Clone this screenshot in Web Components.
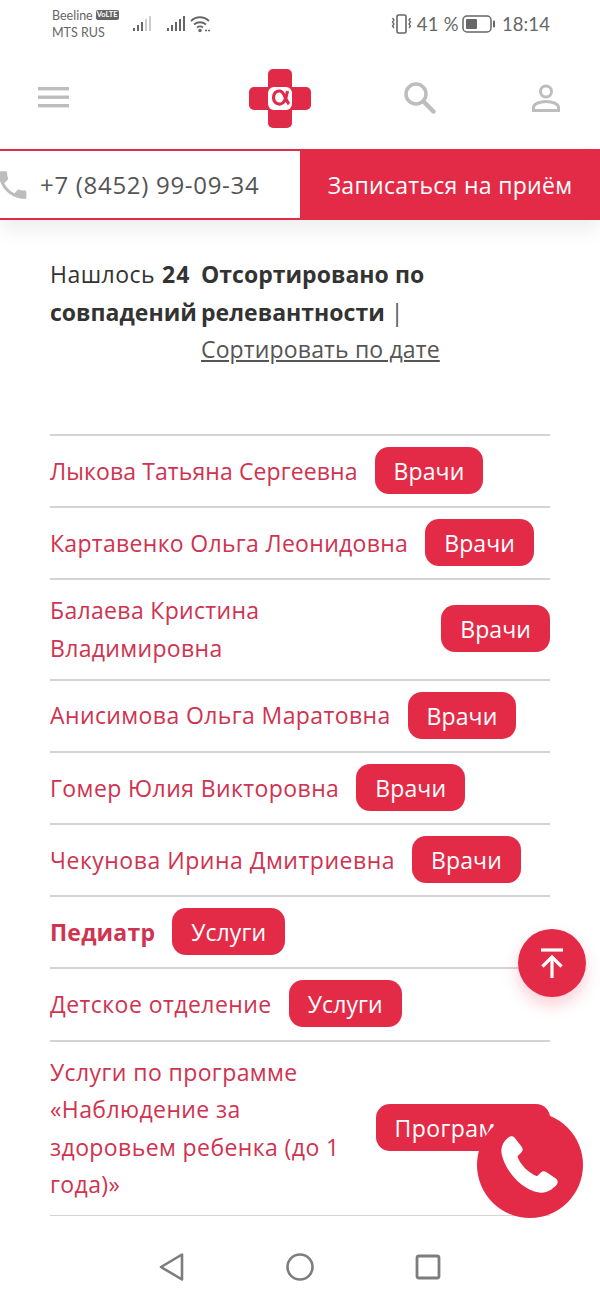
<!DOCTYPE html>
<html>
<head>
<meta charset="utf-8">
<title>Поиск</title>
<style>
  html, body { margin: 0; padding: 0; height: 100%; overflow: hidden; background: #fff; }
  body { font-family: "Open Sans", "Noto Sans", sans-serif; }
</style>
</head>
<body>
<clinic-app>
  <status-bar></status-bar>
  <site-header></site-header>
  <call-bar></call-bar>
  <search-summary></search-summary>
  <result-list>
    <result-row tag="Врачи" style="--track:.1px">Лыкова Татьяна Сергеевна</result-row>
    <result-row tag="Врачи" style="--track:.31px">Картавенко Ольга Леонидовна</result-row>
    <result-row tag="Врачи" style="--track:.33px">Балаева Кристина Владимировна</result-row>
    <result-row tag="Врачи" style="--track:.39px">Анисимова Ольга Маратовна</result-row>
    <result-row tag="Врачи" style="--track:.41px">Гомер Юлия Викторовна</result-row>
    <result-row tag="Врачи" style="--track:.51px">Чекунова Ирина Дмитриевна</result-row>
    <result-row tag="Услуги" style="--track:.2px"><b>Педиатр</b></result-row>
    <result-row tag="Услуги" style="--track:.45px">Детское отделение</result-row>
    <result-row tag="Программы" style="--track:.4px;--tag-track:.4px">Услуги по программе «Наблюдение за здоровьем ребенка (до 1 года)»</result-row>
  </result-list>
  <nav-bar></nav-bar>
  <float-buttons></float-buttons>
</clinic-app>

<script>
const appTemplate = document.createElement('template');
appTemplate.innerHTML = `
<style>
  :host { display: flex; flex-direction: column; position: relative; width: 600px; height: 1299px; overflow: hidden; background: #fff; }
</style>
<slot></slot>
`;

class ClinicApp extends HTMLElement {
    constructor() {
        super();
        this.attachShadow({ mode: 'open' });
        this.shadowRoot.appendChild(appTemplate.content.cloneNode(true));
    }
}

const statusTemplate = document.createElement('template');
statusTemplate.innerHTML = `
<style>
  :host { display: flex; align-items: center; height: 47px; flex: none; padding: 0 50px 0 52px; color: #666; font-family: "Lato", "Noto Sans", sans-serif; }
  .carriers { font-size: 12.5px; width: 81px; }
  .carriers div { display: flex; align-items: center; gap: 3px; height: 17px; }
  .volte { background: #666; color: #fff; font-size: 7.5px; font-weight: 700; line-height: 10px; padding: 0 1px; border-radius: 2px; }
  svg { display: block; flex: none; }
  .right { margin-left: auto; display: flex; align-items: center; font-size: 18.5px; }
  .pct { margin: 0 3px 0 5px; letter-spacing: .3px; }
  .time { margin-left: 7px; letter-spacing: .1px; }
</style>
<div class="carriers">
  <div>Beeline <span class="volte">VoLTE</span></div>
  <div>MTS RUS</div>
</div>
<svg width="18" height="18" viewBox="0 0 18 18" style="margin-right:16px">
  <g fill="#666"><rect x="0" y="13" width="2" height="3"/><rect x="4" y="10" width="2" height="6"/><rect x="8" y="7" width="2" height="9"/></g>
  <g fill="#ccc"><rect x="12" y="4" width="2" height="12"/><rect x="16" y="1" width="2" height="15"/></g>
</svg>
<svg width="18" height="18" viewBox="0 0 18 18" style="margin-right:5px" fill="#666">
  <rect x="0" y="13" width="2" height="3"/><rect x="4" y="10" width="2" height="6"/><rect x="8" y="7" width="2" height="9"/><rect x="12" y="4" width="2" height="12"/><rect x="16" y="1" width="2" height="15"/>
</svg>
<svg width="22" height="18" viewBox="0 0 22 18" fill="none" stroke="#666" stroke-width="1.800">
  <path d="M1 6c5-5 13-5 18 0"/><path d="M4 9.500c3.500-3 8.500-3 12 0"/><path d="M7 12.500c2-1.500 4-1.500 6 0"/>
  <circle cx="10" cy="15.500" r="1.700" fill="#666" stroke="none"/><path d="M15 15.500h6" stroke-width="1.500" stroke-dasharray="2 1"/>
</svg>
<div class="right">
  <svg width="21" height="20" viewBox="0 0 21 20" fill="none" stroke="#666" stroke-width="1.300">
    <rect x="6" y="1" width="9" height="18" rx="1.500" stroke-width="1.600"/>
    <path d="M1.500 4l1.500 2-1.500 2 1.500 2-1.500 2 1.500 2M19.500 4l-1.500 2 1.500 2-1.500 2 1.500 2-1.500 2"/>
  </svg>
  <span class="pct">41 %</span>
  <svg width="33" height="18" viewBox="0 0 33 18" fill="none">
    <rect x="1" y="1" width="28" height="16" rx="4" stroke="#666" stroke-width="1.500"/>
    <rect x="4" y="4" width="11" height="10" rx="1" fill="#666"/>
    <rect x="31" y="5.500" width="2" height="7" rx="1" fill="#666"/>
  </svg>
  <span class="time">18:14</span>
</div>
`;

class StatusBar extends HTMLElement {
    constructor() {
        super();
        this.attachShadow({ mode: 'open' });
        this.shadowRoot.appendChild(statusTemplate.content.cloneNode(true));
    }
}

const headerTemplate = document.createElement('template');
headerTemplate.innerHTML = `
<style>
  :host { display: flex; align-items: center; height: 102px; flex: none; padding: 0 40px 0 38px; box-sizing: border-box; }
  svg { display: block; flex: none; }
  .logo { margin-left: 180px; }
  .search { margin-left: 92px; margin-top: -2px; }
  .user { margin-left: auto; }
</style>
<svg width="31" height="22" viewBox="0 0 31 22" fill="#bdbdbd">
  <rect y="0" width="31" height="3.400"/><rect y="8.500" width="31" height="3.400"/><rect y="17" width="31" height="3.400"/>
</svg>
<svg class="logo" width="62" height="59" viewBox="0 0 62 59">
  <path fill="#e02a47" d="M19 5a5 5 0 0 1 5-5h14a5 5 0 0 1 5 5v13h14a5 5 0 0 1 5 5v13a5 5 0 0 1-5 5H43v13a5 5 0 0 1-5 5H24a5 5 0 0 1-5-5V41H5a5 5 0 0 1-5-5V23a5 5 0 0 1 5-5h14z"/>
  <rect x="19" y="18" width="24" height="23" rx="6" fill="#fff"/>
  <path fill="none" stroke="#e02a47" stroke-width="3.200" d="M38.500 22c-1 6-2.500 12.500-7 13-4.500.4-7-2.500-7-6.500s2.500-6.800 6.500-6.500c4.500.4 5 9 9 13"/>
</svg>
<svg class="search" width="33" height="33" viewBox="0 0 33 33" fill="none" stroke="#bdbdbd">
  <circle cx="13" cy="13" r="10" stroke-width="3.500"/><path d="M20.500 20.500L30.500 30.500" stroke-width="4.500" stroke-linecap="round"/>
</svg>
<svg class="user" width="28" height="28" viewBox="0 0 28 28" fill="none" stroke="#bdbdbd" stroke-width="3">
  <circle cx="14" cy="7.500" r="5.500"/><path d="M1.500 26.500v-3c0-3.500 6-6 12.500-6s12.500 2.500 12.500 6v3z"/>
</svg>
`;

class SiteHeader extends HTMLElement {
    constructor() {
        super();
        this.attachShadow({ mode: 'open' });
        this.shadowRoot.appendChild(headerTemplate.content.cloneNode(true));
    }
}

const callTemplate = document.createElement('template');
callTemplate.innerHTML = `
<style>
  :host { display: flex; height: 71px; flex: none; position: relative; z-index: 1; background: #fff; box-shadow: 0 10px 20px rgba(0,0,0,.07); box-sizing: border-box; }
  .phone { width: 300px; box-sizing: border-box; display: flex; align-items: center; border: 2px solid #e32b48; border-left: 0; border-right-width: 0; color: #555; font-size: 24px; letter-spacing: .7px; }
  svg { display: block; margin: 0 9px 0 -6px; flex: none; }
  .cta { flex: 1; background: #e32b48; color: #fff; font-size: 23px; display: flex; align-items: center; justify-content: center; letter-spacing: .3px; }
</style>
<div class="phone">
  <svg width="37" height="38" viewBox="0 0 24 24" fill="#bdbdbd"><path d="M6.600 10.800c1.400 2.800 3.800 5.100 6.600 6.600l2.200-2.200c.3-.3.700-.4 1-.2 1.100.4 2.300.6 3.600.6.600 0 1 .4 1 1V20c0 .6-.4 1-1 1C10.600 21 3 13.400 3 4c0-.6.400-1 1-1h3.500c.6 0 1 .4 1 1 0 1.300.2 2.500.6 3.600.1.300 0 .7-.2 1z"/></svg>
  <span>+7 (8452) 99-09-34</span>
</div>
<div class="cta">Записаться на приём</div>
`;

class CallBar extends HTMLElement {
    constructor() {
        super();
        this.attachShadow({ mode: 'open' });
        this.shadowRoot.appendChild(callTemplate.content.cloneNode(true));
    }
}

const summaryTemplate = document.createElement('template');
summaryTemplate.innerHTML = `
<style>
  :host { display: flex; flex: none; gap: 10px; padding: 36px 50px 0; height: 214px; box-sizing: border-box; color: #333; font-size: 23px; line-height: 37.500px; letter-spacing: .15px; }
  .count { width: 141px; flex: none; }
  .light { letter-spacing: .45px; }
  .num { letter-spacing: 1px; margin-left: 1px; }
  .sort { width: 241px; flex: none; }
  a { color: #555; text-decoration: underline; }
  .sep { color: #555; }
  b { display: inline-block; letter-spacing: .02px; }
</style>
<div class="count"><span class="light">Нашлось</span> <b class="num">24</b> <b>совпадений</b></div>
<div class="sort"><b>Отсортировано</b> <b>по</b> <b>релевантности</b> <span class="sep">|</span> <a>Сортировать по дате</a></div>
`;

class SearchSummary extends HTMLElement {
    constructor() {
        super();
        this.attachShadow({ mode: 'open' });
        this.shadowRoot.appendChild(summaryTemplate.content.cloneNode(true));
    }
}

const listTemplate = document.createElement('template');
listTemplate.innerHTML = `
<style>
  :host { display: block; flex: none; height: 782px; margin: 0 50px; border-top: 2px solid #d4d4d4; box-sizing: border-box; }
</style>
<slot></slot>
`;

class ResultList extends HTMLElement {
    constructor() {
        super();
        this.attachShadow({ mode: 'open' });
        this.shadowRoot.appendChild(listTemplate.content.cloneNode(true));
    }
}

const rowTemplate = document.createElement('template');
rowTemplate.innerHTML = `
<style>
  :host { display: flex; align-items: center; gap: 17px; padding: 11.100px 0 12.100px; border-bottom: 2px solid #d4d4d4; color: #cf3350; font-size: 23px; line-height: 37.500px; letter-spacing: var(--track, .27px); }
  .name { min-width: 0; margin: 1px 0 -1px; }
  .tag { flex: none; height: 47px; line-height: 49px; padding: 0 19px; border-radius: 14px; background: #e32b48; color: #fff; font-size: 23px; letter-spacing: var(--tag-track, .1px); }
</style>
<div class="name"><slot></slot></div>
<div class="tag"></div>
`;

class ResultRow extends HTMLElement {
    constructor() {
        super();
        this.attachShadow({ mode: 'open' });
        this.shadowRoot.appendChild(rowTemplate.content.cloneNode(true));
    }
    connectedCallback() {
        this.shadowRoot.querySelector('.tag').textContent = this.getAttribute('tag');
    }
}

const navTemplate = document.createElement('template');
navTemplate.innerHTML = `
<style>
  :host { display: flex; justify-content: space-between; align-items: center; flex: none; height: 83px; padding: 19px 159px 0 158px; box-sizing: border-box; background: #fff; }
  svg { display: block; }
</style>
<svg width="26" height="30" viewBox="0 0 26 30" fill="none" stroke="#7d7d7d" stroke-width="2.600" stroke-linejoin="round"><path d="M24 2.500v25L3 15z"/></svg>
<svg width="28" height="28" viewBox="0 0 28 28" fill="none" stroke="#7d7d7d" stroke-width="2.600"><circle cx="14" cy="14" r="12.500"/></svg>
<svg width="26" height="26" viewBox="0 0 26 26" fill="none" stroke="#7d7d7d" stroke-width="2.800"><rect x="2" y="2" width="22" height="22" rx="2"/></svg>
`;

class NavBar extends HTMLElement {
    constructor() {
        super();
        this.attachShadow({ mode: 'open' });
        this.shadowRoot.appendChild(navTemplate.content.cloneNode(true));
    }
}

const floatTemplate = document.createElement('template');
floatTemplate.innerHTML = `
<style>
  :host { display: block; }
  .up, .call { position: absolute; border-radius: 50%; background: #e32b48; display: flex; align-items: center; justify-content: center; }
  .up { left: 518px; top: 929px; width: 68px; height: 68px; box-shadow: 0 8px 16px rgba(230,42,72,.22); }
  .call { left: 477px; top: 1112px; width: 106px; height: 106px; }
  svg { display: block; }
</style>
<div class="up">
  <svg width="22" height="30" viewBox="0 0 22 30" fill="none" stroke="#fff" stroke-width="3.200">
    <path d="M0 2h22" /><path d="M11 30V9" /><path d="M1.500 18.500L11 9l9.500 9.500" />
  </svg>
</div>
<div class="call">
  <svg width="65" height="65" viewBox="0 0 60 60" fill="#fff">
    <path d="M9 4.500c2-1.500 4.500-2 6-.5l7 9c1.200 1.700 1 3.500-.5 5l-3.500 3.500c2 7 10 15.500 18 18.500l3.500-3.500c1.500-1.500 3.500-1.500 5-.5l9.500 6.500c1.500 1.500 1.500 4 0 5.500C50 52 45 56 38 55 22 52 8 37 3.500 20 2 13 5 8 9 4.500z"/>
  </svg>
</div>
`;

class FloatButtons extends HTMLElement {
    constructor() {
        super();
        this.attachShadow({ mode: 'open' });
        this.shadowRoot.appendChild(floatTemplate.content.cloneNode(true));
    }
}

window.customElements.define('clinic-app', ClinicApp);
window.customElements.define('status-bar', StatusBar);
window.customElements.define('site-header', SiteHeader);
window.customElements.define('call-bar', CallBar);
window.customElements.define('search-summary', SearchSummary);
window.customElements.define('result-list', ResultList);
window.customElements.define('result-row', ResultRow);
window.customElements.define('nav-bar', NavBar);
window.customElements.define('float-buttons', FloatButtons);
</script>
</body>
</html>
